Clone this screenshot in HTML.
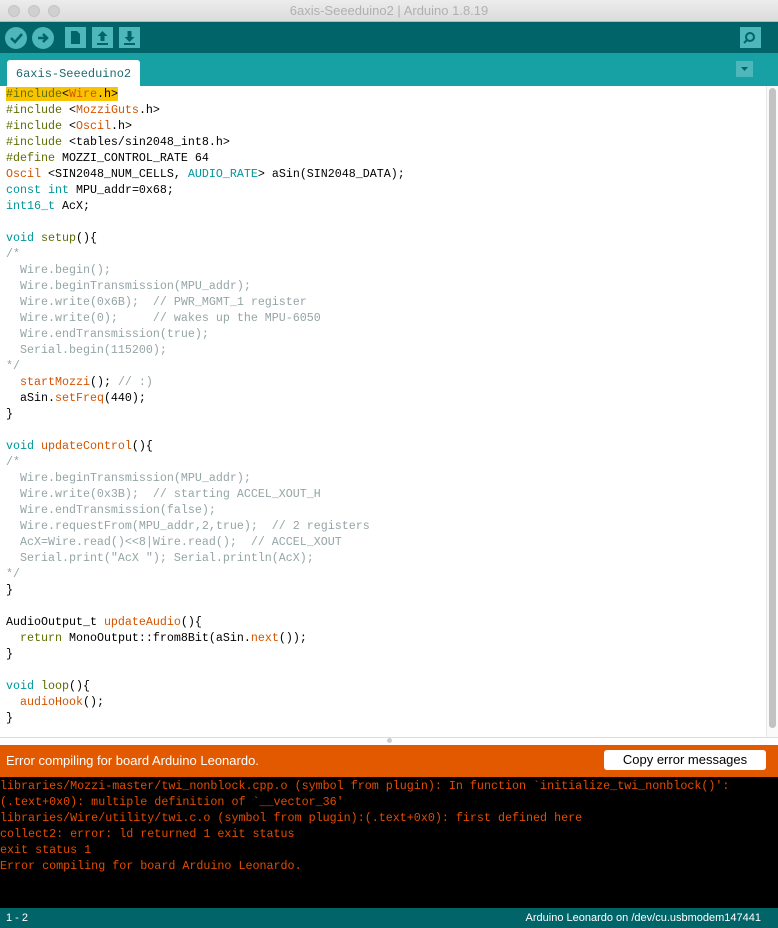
<!DOCTYPE html>
<html><head><meta charset="utf-8">
<style>
*{margin:0;padding:0;box-sizing:border-box}
html,body{width:778px;height:928px;overflow:hidden}
body{background:#fff;font-family:"Liberation Sans",sans-serif;position:relative}
.title{position:absolute;top:0;left:0;width:778px;height:22px;background:linear-gradient(#ececec,#dcdcdc);border-bottom:1px solid #b8b8b8;text-align:center;font-size:13px;line-height:22px;color:#b0b0b0}
.dot{position:absolute;top:5px;width:12px;height:12px;border-radius:50%;background:#d0d0d0;border:1px solid #c4c4c4}
.tool{position:absolute;top:22px;left:0;width:778px;height:31px;background:#006468}
.tabbar{position:absolute;top:53px;left:0;width:778px;height:33px;background:#17a1a5}
.tab{position:absolute;left:7px;top:7px;width:133px;height:26px;background:#fff;border-radius:3px 3px 0 0;color:#1f6b73;font-family:"Liberation Mono",monospace;font-size:12px;line-height:28px;text-align:center}
.rb{position:absolute;width:22px;height:22px;border-radius:50%;background:#4db7bb;top:27px}
.sq{position:absolute;width:21px;height:21px;background:#4db7bb;top:27px}
.code{position:absolute;top:86px;left:0;width:766px;height:651px;overflow:hidden;font-family:"Liberation Mono",monospace;font-size:11.67px;line-height:16px;color:#000;padding-left:6px}
.code div{height:16px;white-space:pre}
.k{color:#5e6d03}.o{color:#d35400}.b{color:#00979c}.c{color:#95a5a6}
.hl{background:#f8c300}
.sb{position:absolute;left:766px;top:86px;width:12px;height:651px;background:#fafafa;border-left:1px solid #e8e8e8}
.thumb{position:absolute;left:2px;top:2px;width:7px;height:640px;border-radius:4px;background:#c2c2c2}
.div{position:absolute;top:737px;left:0;width:778px;height:8px;background:#fff;border-top:1px solid #ddd}
.err{position:absolute;top:745px;left:0;width:778px;height:32px;background:#e35900;color:#fff;font-size:13px;line-height:32px;padding-left:6px}
.btn{position:absolute;right:12px;top:5px;width:162px;height:20px;background:#fff;border-radius:3px;color:#000;font-size:13px;line-height:20px;text-align:center}
.con{position:absolute;top:777px;left:0;width:778px;height:131px;background:#000;color:#e34c00;font-family:"Liberation Mono",monospace;font-size:11.7px;line-height:16px;white-space:pre;padding-top:1px}
.st{position:absolute;top:908px;left:0;width:778px;height:20px;background:#006468;color:#fff;font-size:11px;line-height:20px;padding:0 6px}
</style></head><body>
<div class="title">6axis-Seeeduino2 | Arduino 1.8.19
<div class="dot" style="left:8px"></div><div class="dot" style="left:28px"></div><div class="dot" style="left:48px"></div></div>
<div class="tool"></div>
<div class="rb" style="left:5px"><svg width="22" height="22"><path d="M6 11l4 4 7-8" stroke="#006468" stroke-width="2.5" fill="none"/></svg></div>
<div class="rb" style="left:32px"><svg width="22" height="22"><path d="M6 11h9M11 7l4 4-4 4" stroke="#006468" stroke-width="2.5" fill="none"/></svg></div>
<div class="sq" style="left:65px"><svg width="21" height="21"><path d="M6 4h6l3 3v10H6z" fill="#006468"/></svg></div>
<div class="sq" style="left:92px"><svg width="21" height="21"><path d="M10.5 4l-5 5h3v5h4V9h3zM5 16h11v2H5z" fill="#006468"/></svg></div>
<div class="sq" style="left:119px"><svg width="21" height="21"><path d="M10.5 15l-5-5h3V4h4v6h3zM5 16h11v2H5z" fill="#006468"/></svg></div>
<div class="sq" style="left:740px"><svg width="21" height="21"><circle cx="10" cy="10" r="4" stroke="#006468" stroke-width="2" fill="none"/><path d="M7 13l-3 3" stroke="#006468" stroke-width="2"/></svg></div>
<div class="tabbar"><div class="tab">6axis-Seeeduino2</div>
<div style="position:absolute;left:736px;top:8px;width:17px;height:16px;background:#4db7bb"><svg width="17" height="16"><path d="M5 6h7l-3.5 4z" fill="#006468"/></svg></div></div>
<div class="code"><div><span class="hl"><span class="k">#include</span>&lt;<span class="o">Wire</span>.h&gt;</span></div><div><span class="k">#include</span> &lt;<span class="o">MozziGuts</span>.h&gt;</div><div><span class="k">#include</span> &lt;<span class="o">Oscil</span>.h&gt;</div><div><span class="k">#include</span> &lt;tables/sin2048_int8.h&gt;</div><div><span class="k">#define</span> MOZZI_CONTROL_RATE 64</div><div><span class="o">Oscil</span> &lt;SIN2048_NUM_CELLS, <span class="b">AUDIO_RATE</span>&gt; aSin(SIN2048_DATA);</div><div><span class="b">const</span> <span class="b">int</span> MPU_addr=0x68;</div><div><span class="b">int16_t</span> AcX;</div><div> </div><div><span class="b">void</span> <span class="k">setup</span>(){</div><div class="c">/*</div><div class="c">  Wire.begin();</div><div class="c">  Wire.beginTransmission(MPU_addr);</div><div class="c">  Wire.write(0x6B);  // PWR_MGMT_1 register</div><div class="c">  Wire.write(0);     // wakes up the MPU-6050</div><div class="c">  Wire.endTransmission(true);</div><div class="c">  Serial.begin(115200);</div><div class="c">*/</div><div>  <span class="o">startMozzi</span>(); <span class="c">// :)</span></div><div>  aSin.<span class="o">setFreq</span>(440);</div><div>}</div><div> </div><div><span class="b">void</span> <span class="o">updateControl</span>(){</div><div class="c">/*</div><div class="c">  Wire.beginTransmission(MPU_addr);</div><div class="c">  Wire.write(0x3B);  // starting ACCEL_XOUT_H</div><div class="c">  Wire.endTransmission(false);</div><div class="c">  Wire.requestFrom(MPU_addr,2,true);  // 2 registers</div><div class="c">  AcX=Wire.read()&lt;&lt;8|Wire.read();  // ACCEL_XOUT</div><div class="c">  Serial.print("AcX "); Serial.println(AcX);</div><div class="c">*/</div><div>}</div><div> </div><div>AudioOutput_t <span class="o">updateAudio</span>(){</div><div>  <span class="k">return</span> MonoOutput::from8Bit(aSin.<span class="o">next</span>());</div><div>}</div><div> </div><div><span class="b">void</span> <span class="k">loop</span>(){</div><div>  <span class="o">audioHook</span>();</div><div>}</div></div>
<div class="sb"><div class="thumb"></div></div>
<div class="div"><div style="position:absolute;left:387px;top:0px;width:5px;height:5px;border-radius:50%;background:#ccc"></div></div>
<div class="err">Error compiling for board Arduino Leonardo.<div class="btn">Copy error messages</div></div>
<div class="con">libraries/Mozzi-master/twi_nonblock.cpp.o (symbol from plugin): In function `initialize_twi_nonblock()':
(.text+0x0): multiple definition of `__vector_36'
libraries/Wire/utility/twi.c.o (symbol from plugin):(.text+0x0): first defined here
collect2: error: ld returned 1 exit status
exit status 1
Error compiling for board Arduino Leonardo.</div>
<div class="st">1 - 2<span style="position:absolute;right:17px">Arduino Leonardo on /dev/cu.usbmodem147441</span></div>
</body></html>
